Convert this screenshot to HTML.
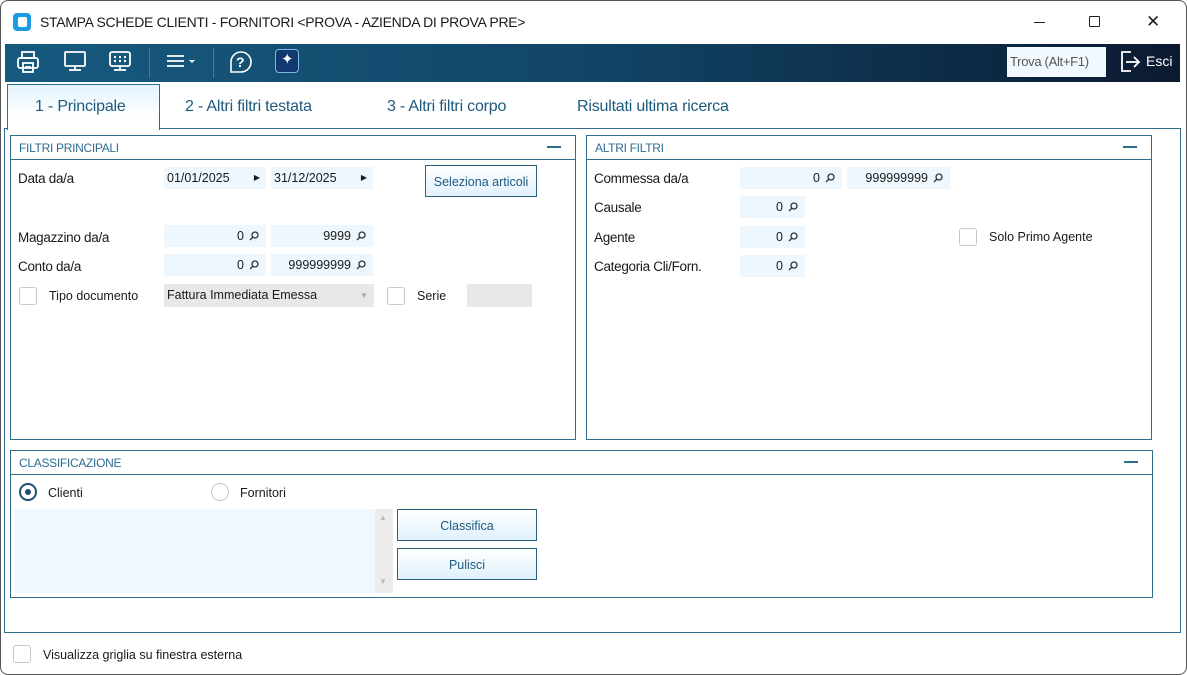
<!DOCTYPE html>
<html><head><meta charset="utf-8"><style>
*{box-sizing:border-box;margin:0;padding:0}
body{width:1187px;height:675px;background:#fff;font-family:"Liberation Sans",sans-serif;font-size:13px;color:#1a1a1a;position:relative;overflow:hidden}
.a{position:absolute}
.win{left:0;top:0;width:1187px;height:675px;border:1px solid #555;border-radius:8px;background:#fff}
.tb{left:5px;top:44px;width:1175px;height:38px;background:linear-gradient(90deg,#175a7f 0%,#114567 50%,#0b1a30 100%)}
.tab{font-size:16px;color:#1d5a7e;top:98px;letter-spacing:-0.2px}
.panel{border:1px solid #2f6c8d;background:#fff}
.ph{font-size:12px;color:#2d6d92;height:24px;line-height:24px;padding-left:8px;border-bottom:1px solid #2f6c8d;letter-spacing:-0.3px}
.min{position:absolute;right:14px;top:10px;width:14px;height:1.5px;background:#2d6d92}
.f{background:#eef7fd;height:22px;line-height:22px;text-align:right;padding-right:22px;font-size:12.5px}
.f svg{position:absolute;right:7px;top:6px}
.lbl{font-size:13.5px;letter-spacing:-0.3px}
.cb{width:18px;height:18px;border:1.5px solid #c8c8c8;border-radius:3px;background:#fff}
.btn{border:1px solid #2a5f80;background:linear-gradient(#fff,#dff1fc);color:#1d5a7e;font-size:12.5px;text-align:center}
</style></head><body>
<div class="a win"></div>
<div class="a" style="left:13px;top:13px;width:18px;height:18px;border-radius:4px;background:#1b9be0"></div>
<div class="a" style="left:18px;top:17px;width:9px;height:10px;border-radius:2px;background:#fff"></div>
<div class="a" style="left:40px;top:14px;font-size:14px;color:#1a1a1a;letter-spacing:-0.3px">STAMPA SCHEDE CLIENTI - FORNITORI &lt;PROVA - AZIENDA DI PROVA PRE&gt;</div>
<div class="a" style="left:1034px;top:22px;width:11px;height:1px;background:#222"></div>
<div class="a" style="left:1089px;top:16px;width:11px;height:11px;border:1px solid #222;border-radius:1px"></div>
<div class="a" style="left:1146px;top:12px;font-size:17px;color:#222">✕</div>
<div class="a tb"></div>
<svg class="a" style="left:16px;top:49px" width="250" height="28" fill="none" stroke="#fff" stroke-width="1.8">
<rect x="6" y="3" width="12" height="6"/><rect x="2" y="9" width="20" height="10" rx="2"/><rect x="7" y="14" width="10" height="9"/><line x1="9" y1="18" x2="15" y2="18"/>
<rect x="49" y="3" width="20" height="14" rx="1"/><line x1="59" y1="17" x2="59" y2="21"/><line x1="53" y1="21" x2="65" y2="21"/>
<rect x="94" y="3" width="20" height="14" rx="2"/><line x1="104" y1="17" x2="104" y2="21"/><line x1="98" y1="21" x2="110" y2="21"/>
<g stroke-width="2.2"><line x1="98" y1="8" x2="100" y2="8"/><line x1="103" y1="8" x2="105" y2="8"/><line x1="108" y1="8" x2="110" y2="8"/><line x1="98" y1="12" x2="100" y2="12"/><line x1="103" y1="12" x2="105" y2="12"/><line x1="108" y1="12" x2="110" y2="12"/></g>
<line x1="151" y1="7" x2="168" y2="7"/><line x1="151" y1="12" x2="168" y2="12"/><line x1="151" y1="17" x2="168" y2="17"/>
<path d="M173 11h6l-3 3z" fill="#fff" stroke="none"/>
<path d="M215 23 L215 13 A10 10 0 1 1 225 23 Z" stroke-width="1.6"/>
</svg>
<div class="a" style="left:236px;top:54px;color:#fff;font-size:14px;font-weight:bold">?</div>
<div class="a" style="left:149px;top:48px;width:1px;height:30px;background:#4b7894"></div>
<div class="a" style="left:213px;top:48px;width:1px;height:30px;background:#4b7894"></div>
<div class="a" style="left:275px;top:49px;width:24px;height:24px;border:1.5px solid #7fb6e6;border-radius:4px;background:#123a70"></div>
<div class="a" style="left:281px;top:50px;color:#fff;font-size:15px">✦</div>
<div class="a" style="left:1007px;top:47px;width:99px;height:30px;background:#f2f9fe;color:#555;font-size:13px;line-height:30px;padding-left:3px;letter-spacing:-0.3px">Trova (Alt+F1)</div>
<svg class="a" style="left:1119px;top:50px" width="24" height="24" fill="none" stroke="#fff" stroke-width="1.8"><path d="M12 2H3v19h9"/><line x1="7" y1="12" x2="20" y2="12"/><path d="M15 7l5 5-5 5"/></svg>
<div class="a" style="left:1146px;top:53px;color:#fff;font-size:14px">Esci</div>
<div class="a" style="left:4px;top:128px;width:1177px;height:505px;border:1px solid #2f6c8d"></div>
<div class="a" style="left:7px;top:84px;width:153px;height:46px;border:1px solid #2f6c8d;border-bottom:none;background:linear-gradient(#e3f3fd,#fff 70%)"></div>
<div class="a tab" style="left:35px">1 - Principale</div>
<div class="a tab" style="left:185px">2 - Altri filtri testata</div>
<div class="a tab" style="left:387px">3 - Altri filtri corpo</div>
<div class="a tab" style="left:577px">Risultati ultima ricerca</div>
<div class="a panel" style="left:10px;top:135px;width:566px;height:305px"><div class="ph">FILTRI PRINCIPALI</div><div class="min"></div></div>
<div class="a lbl" style="left:18px;top:171px">Data da/a</div>
<div class="a f" style="left:164px;top:167px;width:102px;text-align:left;padding-left:3px">01/01/2025<span class="a" style="right:6px;top:0;font-size:8px">▶</span></div>
<div class="a f" style="left:271px;top:167px;width:102px;text-align:left;padding-left:3px">31/12/2025<span class="a" style="right:6px;top:0;font-size:8px">▶</span></div>
<div class="a btn" style="left:425px;top:165px;width:112px;height:32px;line-height:32px">Seleziona articoli</div>
<div class="a lbl" style="left:18px;top:230px">Magazzino da/a</div>
<div class="a f" style="left:164px;top:225px;width:102px">0<svg width="10" height="10" fill="none" stroke="#333" stroke-width="1.3"><circle cx="6" cy="4" r="3"/><line x1="4" y1="6" x2="1" y2="9"/></svg></div>
<div class="a f" style="left:271px;top:225px;width:102px">9999<svg width="10" height="10" fill="none" stroke="#333" stroke-width="1.3"><circle cx="6" cy="4" r="3"/><line x1="4" y1="6" x2="1" y2="9"/></svg></div>
<div class="a lbl" style="left:18px;top:259px">Conto da/a</div>
<div class="a f" style="left:164px;top:254px;width:102px">0<svg width="10" height="10" fill="none" stroke="#333" stroke-width="1.3"><circle cx="6" cy="4" r="3"/><line x1="4" y1="6" x2="1" y2="9"/></svg></div>
<div class="a f" style="left:271px;top:254px;width:102px">999999999<svg width="10" height="10" fill="none" stroke="#333" stroke-width="1.3"><circle cx="6" cy="4" r="3"/><line x1="4" y1="6" x2="1" y2="9"/></svg></div>
<div class="a cb" style="left:19px;top:287px"></div>
<div class="a" style="left:49px;top:289px;font-size:12.5px">Tipo documento</div>
<div class="a" style="left:164px;top:284px;width:210px;height:23px;background:#e8e8e8;line-height:23px;padding-left:3px;font-size:12.5px">Fattura Immediata Emessa<span class="a" style="right:6px;top:0;font-size:8px;color:#aaa">▼</span></div>
<div class="a cb" style="left:387px;top:287px"></div>
<div class="a" style="left:417px;top:289px;font-size:12.5px">Serie</div>
<div class="a" style="left:467px;top:284px;width:65px;height:23px;background:#e8e8e8"></div>
<div class="a panel" style="left:586px;top:135px;width:566px;height:305px"><div class="ph">ALTRI FILTRI</div><div class="min"></div></div>
<div class="a lbl" style="left:594px;top:171px">Commessa da/a</div>
<div class="a f" style="left:740px;top:167px;width:102px">0<svg width="10" height="10" fill="none" stroke="#333" stroke-width="1.3"><circle cx="6" cy="4" r="3"/><line x1="4" y1="6" x2="1" y2="9"/></svg></div>
<div class="a f" style="left:847px;top:167px;width:103px">999999999<svg width="10" height="10" fill="none" stroke="#333" stroke-width="1.3"><circle cx="6" cy="4" r="3"/><line x1="4" y1="6" x2="1" y2="9"/></svg></div>
<div class="a lbl" style="left:594px;top:200px">Causale</div>
<div class="a f" style="left:740px;top:196px;width:65px">0<svg width="10" height="10" fill="none" stroke="#333" stroke-width="1.3"><circle cx="6" cy="4" r="3"/><line x1="4" y1="6" x2="1" y2="9"/></svg></div>
<div class="a lbl" style="left:594px;top:230px">Agente</div>
<div class="a f" style="left:740px;top:226px;width:65px">0<svg width="10" height="10" fill="none" stroke="#333" stroke-width="1.3"><circle cx="6" cy="4" r="3"/><line x1="4" y1="6" x2="1" y2="9"/></svg></div>
<div class="a cb" style="left:959px;top:228px"></div>
<div class="a" style="left:989px;top:230px;font-size:12.5px">Solo Primo Agente</div>
<div class="a lbl" style="left:594px;top:259px">Categoria Cli/Forn.</div>
<div class="a f" style="left:740px;top:255px;width:65px">0<svg width="10" height="10" fill="none" stroke="#333" stroke-width="1.3"><circle cx="6" cy="4" r="3"/><line x1="4" y1="6" x2="1" y2="9"/></svg></div>
<div class="a panel" style="left:10px;top:450px;width:1143px;height:148px"><div class="ph">CLASSIFICAZIONE</div><div class="min"></div></div>
<div class="a" style="left:19px;top:483px;width:18px;height:18px;border:2px solid #1d4f70;border-radius:50%"></div>
<div class="a" style="left:25px;top:489px;width:6px;height:6px;background:#1d4f70;border-radius:50%"></div>
<div class="a" style="left:48px;top:486px;font-size:12.5px">Clienti</div>
<div class="a" style="left:211px;top:483px;width:18px;height:18px;border:1.5px solid #c8c8c8;border-radius:50%"></div>
<div class="a" style="left:240px;top:486px;font-size:12.5px">Fornitori</div>
<div class="a" style="left:14px;top:509px;width:379px;height:84px;background:#eff8fd"></div>
<div class="a" style="left:375px;top:509px;width:18px;height:84px;background:#ececec"></div>
<div class="a" style="left:379px;top:513px;font-size:8px;color:#bbb">▲</div>
<div class="a" style="left:379px;top:577px;font-size:8px;color:#bbb">▼</div>
<div class="a btn" style="left:397px;top:509px;width:140px;height:32px;line-height:32px">Classifica</div>
<div class="a btn" style="left:397px;top:548px;width:140px;height:32px;line-height:32px">Pulisci</div>
<div class="a cb" style="left:13px;top:645px"></div>
<div class="a" style="left:43px;top:648px;font-size:12.5px">Visualizza griglia su finestra esterna</div>
</body></html>
